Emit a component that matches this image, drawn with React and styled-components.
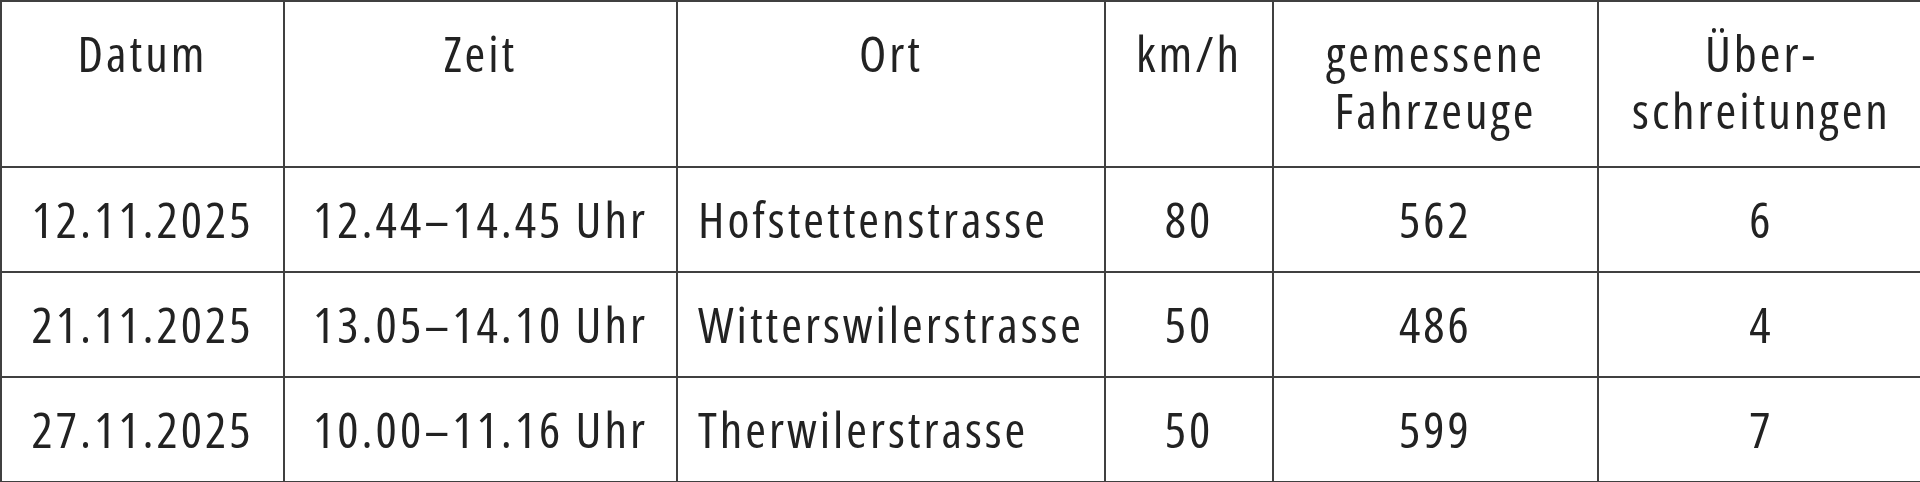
import React from 'react';
import styled, { createGlobalStyle } from 'styled-components';

const GlobalStyle = createGlobalStyle`
    html, body {
        margin: 0;
        padding: 0;
        background: #ffffff;
        overflow: hidden;
    }
`;

const Table = styled.table`
    border-collapse: collapse;
    table-layout: fixed;
    width: 1924px;
    font-family: "Open Sans", "Noto Sans", sans-serif;
    font-stretch: 80%;
    font-size: 50px;
    letter-spacing: 3px;
    color: #222222;
`;

const HeadCell = styled.th`
    height: 166px;
    padding: 23px 4px 0;
    box-sizing: border-box;
    border: 2px solid #404040;
    font-weight: normal;
    line-height: 57px;
    text-align: center;
    vertical-align: top;
`;

const Cell = styled.td`
    height: 105px;
    padding: 0 ${props => (props.$align === 'left' ? '20px' : '4px')};
    box-sizing: border-box;
    border: 2px solid #404040;
    line-height: 57px;
    text-align: ${props => props.$align || 'center'};
    vertical-align: middle;
    white-space: nowrap;
`;

const columns = [283, 393, 428, 168, 325, 327];

const rows = [
    ['12.11.2025', '12.44–14.45 Uhr', 'Hofstettenstrasse', '80', '562', '6'],
    ['21.11.2025', '13.05–14.10 Uhr', 'Witterswilerstrasse', '50', '486', '4'],
    ['27.11.2025', '10.00–11.16 Uhr', 'Therwilerstrasse', '50', '599', '7'],
];

const App = () => (
    <>
        <GlobalStyle />
        <Table>
            <colgroup>
                {columns.map((w, i) => (
                    <col key={i} style={{ width: w }} />
                ))}
            </colgroup>
            <thead>
                <tr>
                    <HeadCell>Datum</HeadCell>
                    <HeadCell>Zeit</HeadCell>
                    <HeadCell>Ort</HeadCell>
                    <HeadCell>km/h</HeadCell>
                    <HeadCell>gemessene<br />Fahrzeuge</HeadCell>
                    <HeadCell>Über-<br />schreitungen</HeadCell>
                </tr>
            </thead>
            <tbody>
                {rows.map(row => (
                    <tr key={row[0]}>
                        {row.map((value, i) => (
                            <Cell key={i} $align={i === 2 ? 'left' : 'center'}>{value}</Cell>
                        ))}
                    </tr>
                ))}
            </tbody>
        </Table>
    </>
);

export default App;
